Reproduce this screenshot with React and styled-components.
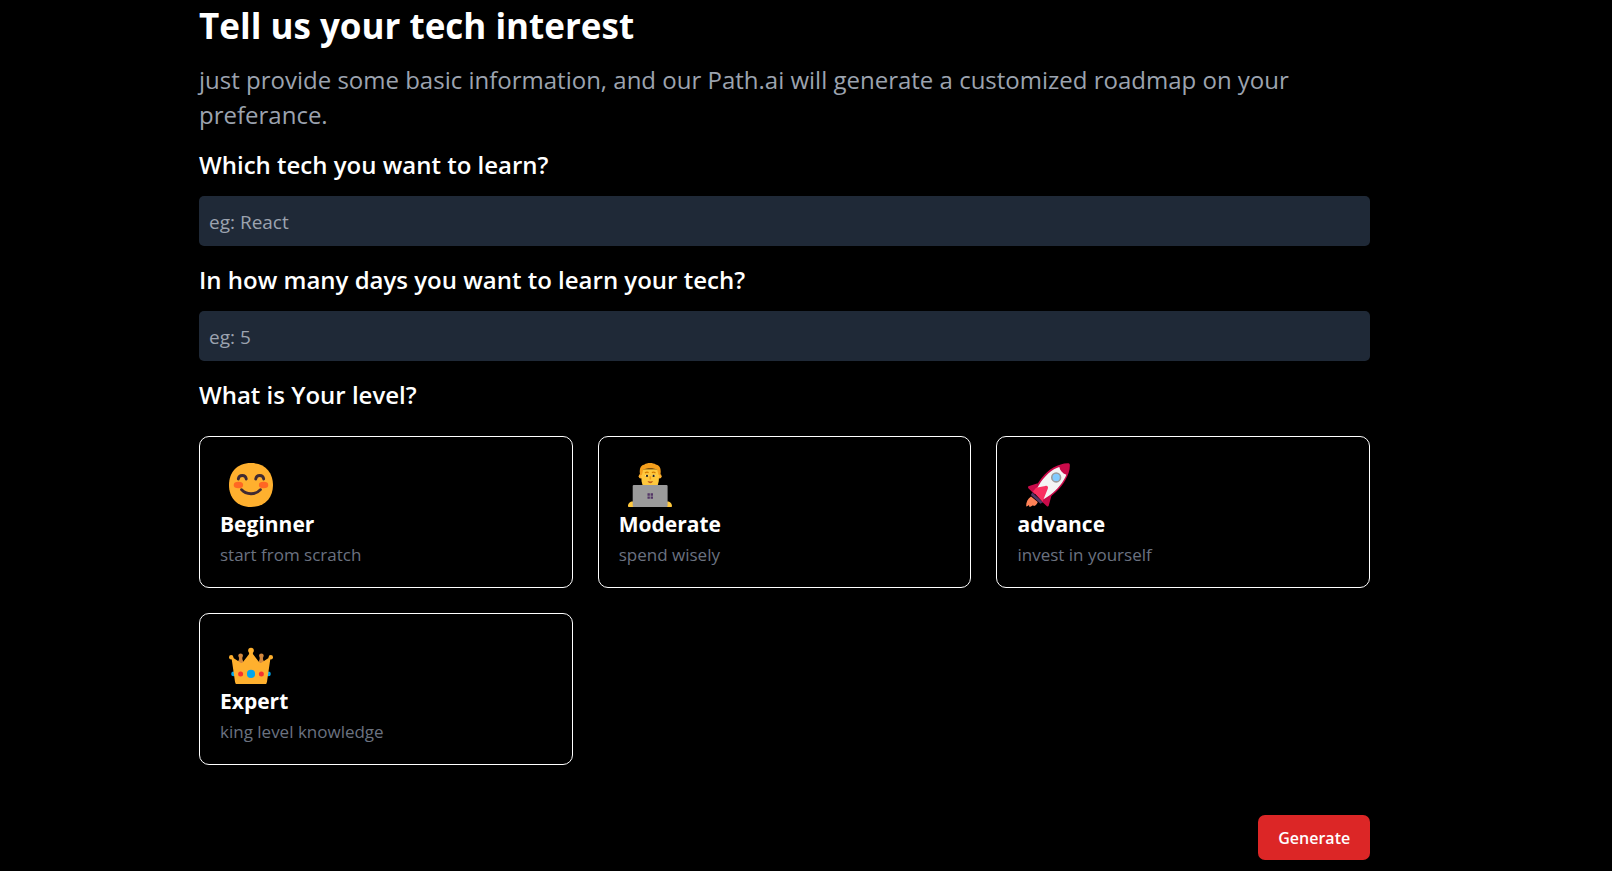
import React, { useState } from "react";
import styled, { createGlobalStyle } from "styled-components";

const GlobalStyle = createGlobalStyle`
  *, *::before, *::after { box-sizing: border-box; }
  body {
    margin: 0;
    background: #000;
    color: #fff;
    font-family: "Open Sans", "Noto Sans", sans-serif;
  }
  h1, h2, p { margin: 0; }
`;

const Page = styled.main`
  padding: 3px 15% 10px 199px;
`;

const Title = styled.h1`
  font-size: 35px;
  line-height: 45px;
  font-weight: 700;
`;

const Intro = styled.p`
  margin-top: 14px;
  font-size: 24px;
  line-height: 35px;
  color: #9ca3af;
`;

const Form = styled.form`
  display: flex;
  flex-direction: column;
  margin-top: 15px;
`;

const Field = styled.div`
  display: flex;
  flex-direction: column;
  gap: 14px;
  margin-bottom: 16px;
`;

const Question = styled.label`
  font-size: 24px;
  line-height: 35px;
  font-weight: 600;
`;

const TextInput = styled.input`
  width: 100%;
  height: 50px;
  padding: 2px 10px 0;
  border: 0;
  border-radius: 5px;
  background: #1f2937;
  color: #fff;
  font: inherit;
  font-size: 19px;
  &::placeholder { color: #9ca3af; opacity: 1; }
`;

const Levels = styled.div`
  display: grid;
  grid-template-columns: repeat(3, minmax(0, 1fr));
  gap: 25px;
  margin-top: 24px;
`;

const LevelCard = styled.button`
  display: flex;
  flex-direction: column;
  align-items: flex-start;
  padding: 20px;
  border: 1px solid #fff;
  border-radius: 10px;
  background: #000;
  color: #fff;
  font: inherit;
  text-align: left;
  cursor: pointer;
`;

const Emoji = styled.svg`
  width: 44px;
  height: 44px;
  margin: 6px 9px 0;
`;

const LevelName = styled.span`
  font-size: 21px;
  line-height: 35px;
  font-weight: 700;
`;

const LevelNote = styled.span`
  font-size: 17px;
  line-height: 25px;
  color: #6b7280;
`;

const GenerateButton = styled.button`
  align-self: flex-end;
  height: 45px;
  margin-top: 50px;
  padding: 0 20px;
  border: 0;
  border-radius: 7px;
  background: #dc2626;
  color: #fff;
  font: inherit;
  font-size: 16px;
  font-weight: 600;
  cursor: pointer;
`;

const SmileIcon = () => (
  <Emoji viewBox="2 2 28 28" aria-hidden="true">
    <path d="M16 30C25.3 30 30 23.7 30 16S25.3 2 16 2 2 8.3 2 16s4.700 14 14 14Z" fill="#FFB02E" />
    <ellipse cx="8" cy="16" rx="3" ry="2.100" fill="#FF6723" />
    <ellipse cx="24" cy="16" rx="3" ry="2.100" fill="#FF6723" />
    <g fill="none" stroke="#402A32" strokeWidth="1.800" strokeLinecap="round">
      <path d="M7.900 12.200C8.300 9.200 12.600 9.200 13 12.200" />
      <path d="M19 12.200C19.400 9.200 23.700 9.200 24.100 12.200" />
      <path d="M10 19C12.800 22.400 19.200 22.400 22 19" />
    </g>
  </Emoji>
);

const LaptopIcon = () => (
  <Emoji viewBox="2 2 28 28" aria-hidden="true">
    <circle cx="10.200" cy="10.400" r="1.400" fill="#FFB02E" />
    <circle cx="22" cy="10.400" r="1.400" fill="#FFB02E" />
    <path d="M10.500 6h11.200v5.500c0 3-.8 4.800-1.700 6.500h-7.800c-.9-1.700-1.700-3.500-1.700-6.500Z" fill="#FFC83D" />
    <path d="M9.700 9.500C9 6 9.800 3.500 12.500 3 14 1.700 18 1.700 19.700 3c2.700.5 3.600 3 2.900 6.500h-1.200L20.500 6c-2.500-.6-6.300-.6-8.800 0l-.8 3.500Z" fill="#F59F1C" />
    <path d="M12.800 8.300q1.200-.8 2.300-.2M17.200 8.100q1.100-.6 2.300.2" fill="none" stroke="#D67D00" strokeWidth=".8" />
    <path d="M12.800 10.300q1.200-1.300 2.400 0ZM17.200 10.300q1.200-1.300 2.400 0Z" fill="#fff" />
    <circle cx="14.100" cy="10.200" r=".7" fill="#212121" />
    <circle cx="18.300" cy="10.200" r=".7" fill="#212121" />
    <path d="M16.200 10.500v2" stroke="#F59F1C" strokeWidth="1" />
    <path d="M14.400 13.500q1.800.4 3.600 0-.7 1.400-1.800 1.400t-1.800-1.400Z" fill="#BF5B16" />
    <path d="M6 26.500H5c-1.700 0-3 1.300-3 3 0 .3.200.5.500.5H6ZM26 26.500h1c1.700 0 3 1.300 3 3 0 .3-.2.500-.5.500H26Z" fill="#FFC83D" />
    <rect x="5" y="16" width="22.200" height="14" rx=".7" fill="#9B9B9B" />
    <path d="M14.400 21.300h1.500v1.500h-1.500ZM16.400 21.300h1.500v1.500h-1.500ZM14.400 23.300h1.500v1.500h-1.500ZM16.400 23.300h1.500v1.500h-1.500Z" fill="#533566" />
  </Emoji>
);

const RocketIcon = () => (
  <Emoji viewBox="2 2 28 28" aria-hidden="true">
    <path d="M5.200 23.300C3 24.800 2 27 2.100 29.700c.7-.1 1.300-.4 1.800-.9l.2 1.100c1-.1 1.700-.4 2.300-1l.7.500c1.200-.5 2-1.400 2.400-2.600Z" fill="#FF8257" />
    <path d="M9.500 14.900 4 16.600c-.7.200-.9.800-.5 1.400L7.500 22ZM17 22.500l-5.300 3.700 3.600 3.300c.4.400 1 .2 1.200-.4L18.700 21Z" fill="#CA0B4A" />
    <path d="M6.800 20.500C9.500 14 14 8 19.400 4.900 22.800 3 26 2 28.700 2.100c.8 0 1.200.4 1.200 1.200.1 3-1 6-2.800 9.500-3.100 5.600-8.300 10.300-14 13.400Z" fill="#CA0B4A" />
    <path d="M7.800 20.600C10.500 14.500 14.700 9 19.800 5.900c1.200-.6 2.300-1.100 3.400-1.400.4 2.200 1.900 4 4.500 4.900-.4 1.100-.9 2.100-1.500 3.100-2.900 5.200-7.500 9.500-13 12.500Z" fill="#F4F4F4" />
    <path d="m6 20.800 6.800 6.200-1.600 1L5.100 22.300Z" fill="#533566" />
    <path d="m6.400 20.200 2-2.400 5.900-1.200c1.400-.3 2.100.7 1.500 1.900l-3.300 8.100Z" fill="#F92F60" />
    <circle cx="21.200" cy="11.200" r="2.800" fill="#83CBFF" stroke="#9B9B9B" strokeWidth="1" />
  </Emoji>
);

const CrownIcon = () => (
  <Emoji viewBox="2 2 28 28" aria-hidden="true">
    <g fill="#D3883E">
      <circle cx="9.400" cy="12.100" r="1.500" />
      <circle cx="22.600" cy="12.100" r="1.500" />
      <path d="M8.600 12h1.600l.4 2.500 1.200 3-4.800-.5 1.300-2.500ZM21.800 12h1.600l.3 2.500 1.300 2.500-4.800.5 1.200-3Z" />
    </g>
    <circle cx="4.900" cy="23.600" r="1.500" fill="#00A6ED" />
    <circle cx="27.100" cy="23.600" r="1.500" fill="#00A6ED" />
    <circle cx="3.400" cy="13" r="1.400" fill="#FFB02E" />
    <circle cx="28.600" cy="13" r="1.400" fill="#FFB02E" />
    <circle cx="16" cy="8.700" r="1.800" fill="#FFB02E" />
    <path d="m3.400 12.500 6 4c.5.300 1 .2 1.400-.3L14.700 11l.5-2.500h1.600l.5 2.500 3.900 5.200c.4.500.9.600 1.400.3l6-4-.4 2.300-2 13.600c-.2 1.400-1 2.600-2.200 2.600H8c-1.200 0-2-1.200-2.200-2.600L3.800 14.800Z" fill="#FFB02E" />
    <circle cx="16" cy="23.600" r="2.600" fill="#00A6ED" />
    <circle cx="9.400" cy="23.600" r="1.600" fill="#F8312F" />
    <circle cx="22.600" cy="23.600" r="1.600" fill="#F8312F" />
  </Emoji>
);

const levels = [
  { name: "Beginner", note: "start from scratch", Icon: SmileIcon },
  { name: "Moderate", note: "spend wisely", Icon: LaptopIcon },
  { name: "advance", note: "invest in yourself", Icon: RocketIcon },
  { name: "Expert", note: "king level knowledge", Icon: CrownIcon },
];

export default function App() {
  const [level, setLevel] = useState(null);

  return (
    <>
      <GlobalStyle />
      <Page>
        <Title>Tell us your tech interest</Title>
        <Intro>
          just provide some basic information, and our Path.ai will generate a
          customized roadmap on your preferance.
        </Intro>
        <Form onSubmit={(event) => event.preventDefault()}>
          <Field>
            <Question htmlFor="tech">Which tech you want to learn?</Question>
            <TextInput id="tech" type="text" placeholder="eg: React" />
          </Field>
          <Field>
            <Question htmlFor="days">In how many days you want to learn your tech?</Question>
            <TextInput id="days" type="text" inputMode="numeric" placeholder="eg: 5" />
          </Field>
          <Question as="h2" id="level-question">What is Your level?</Question>
          <Levels role="group" aria-labelledby="level-question">
            {levels.map(({ name, note, Icon }) => (
              <LevelCard
                key={name}
                type="button"
                aria-pressed={level === name}
                onClick={() => setLevel(name)}
              >
                <Icon />
                <LevelName>{name}</LevelName>
                <LevelNote>{note}</LevelNote>
              </LevelCard>
            ))}
          </Levels>
          <GenerateButton type="submit">Generate</GenerateButton>
        </Form>
      </Page>
    </>
  );
}
